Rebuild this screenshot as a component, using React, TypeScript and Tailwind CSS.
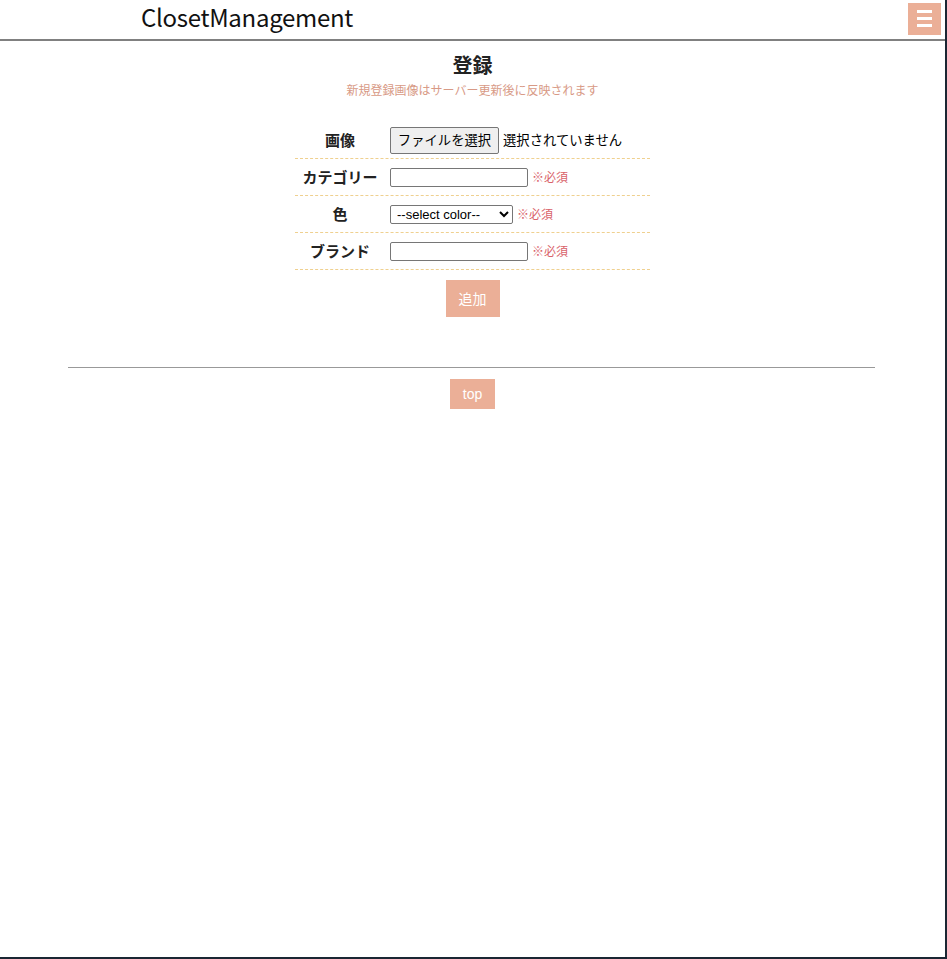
const jp = "font-['Meiryo','Noto_Sans_CJK_JP',sans-serif]";

type Row = {
  label: string;
  field: "file" | "text" | "select";
};

const rows: Row[] = [
  { label: "画像", field: "file" },
  { label: "カテゴリー", field: "text" },
  { label: "色", field: "select" },
  { label: "ブランド", field: "text" },
];

function Required() {
  return <span className="ml-[4px] text-[12px] text-[#d9626a]">※必須</span>;
}

function Field({ field }: { field: Row["field"] }) {
  if (field === "file") {
    return (
      <div className="flex items-center">
        <button className="h-[27px] w-[109px] rounded-[2px] border border-[#767676] bg-[#efefef] text-[13.33px] text-black">
          ファイルを選択
        </button>
        <span className="ml-[4px] text-[13.33px] text-black">選択されていません</span>
      </div>
    );
  }
  if (field === "select") {
    return (
      <div className="flex items-center">
        <select className="h-[19px] w-[123px] rounded-[2px] border border-[#767676] bg-white pl-[2px] font-['Liberation_Sans',sans-serif] text-[13px] leading-none text-black">
          <option>--select color--</option>
        </select>
        <Required />
      </div>
    );
  }
  return (
    <div className="flex items-center">
      <input type="text" className="h-[19px] w-[138px] rounded-[2px] border border-[#767676] bg-white" />
      <Required />
    </div>
  );
}

export default function App() {
  return (
    <div className={`${jp} flex h-[959px] w-[947px] bg-[#1a2633]`}>
      <div className="flex h-[957px] w-[945px] flex-col bg-white">
        <header className="flex h-[41px] items-center justify-between border-b-2 border-[#808080] pb-[2px] pl-[141px] pr-[4px]">
          <h1 className="-mt-[4px] text-[24px] leading-none tracking-[-0.3px] text-[#111]">ClosetManagement</h1>
          <button className="flex h-[32px] w-[33px] flex-col items-center justify-center gap-[4px] bg-[#ebaf97]">
            <span className="h-[3px] w-[15px] bg-white" />
            <span className="h-[3px] w-[15px] bg-white" />
            <span className="h-[3px] w-[15px] bg-white" />
          </button>
        </header>

        <main className="flex flex-col items-center">
          <h2 className="mt-[9px] text-[20px] font-bold leading-[30px] text-[#222]">登録</h2>
          <p className="mt-[2px] text-[12px] leading-[16px] text-[#d89a86]">新規登録画像はサーバー更新後に反映されます</p>

          <div className="mt-[24px] flex w-[355px] flex-col">
            {rows.map((row) => (
              <div key={row.label} className="flex h-[37px] items-center border-b border-dashed border-[#efd08f]">
                <div className="w-[90px] text-center text-[15px] font-bold text-[#222]">{row.label}</div>
                <div className="pl-[5px]">
                  <Field field={row.field} />
                </div>
              </div>
            ))}
          </div>

          <button className="mt-[10px] h-[37px] w-[54px] bg-[#ebaf97] text-[14px] text-white">追加</button>
        </main>

        <div className="ml-[68px] mr-[70px] mt-[50px] border-t border-[#999]" />
        <div className="mt-[11px] flex justify-center">
          <button className="h-[30px] w-[45px] bg-[#ebaf97] font-['Liberation_Sans',sans-serif] text-[14px] text-white">top</button>
        </div>
      </div>
    </div>
  );
}
